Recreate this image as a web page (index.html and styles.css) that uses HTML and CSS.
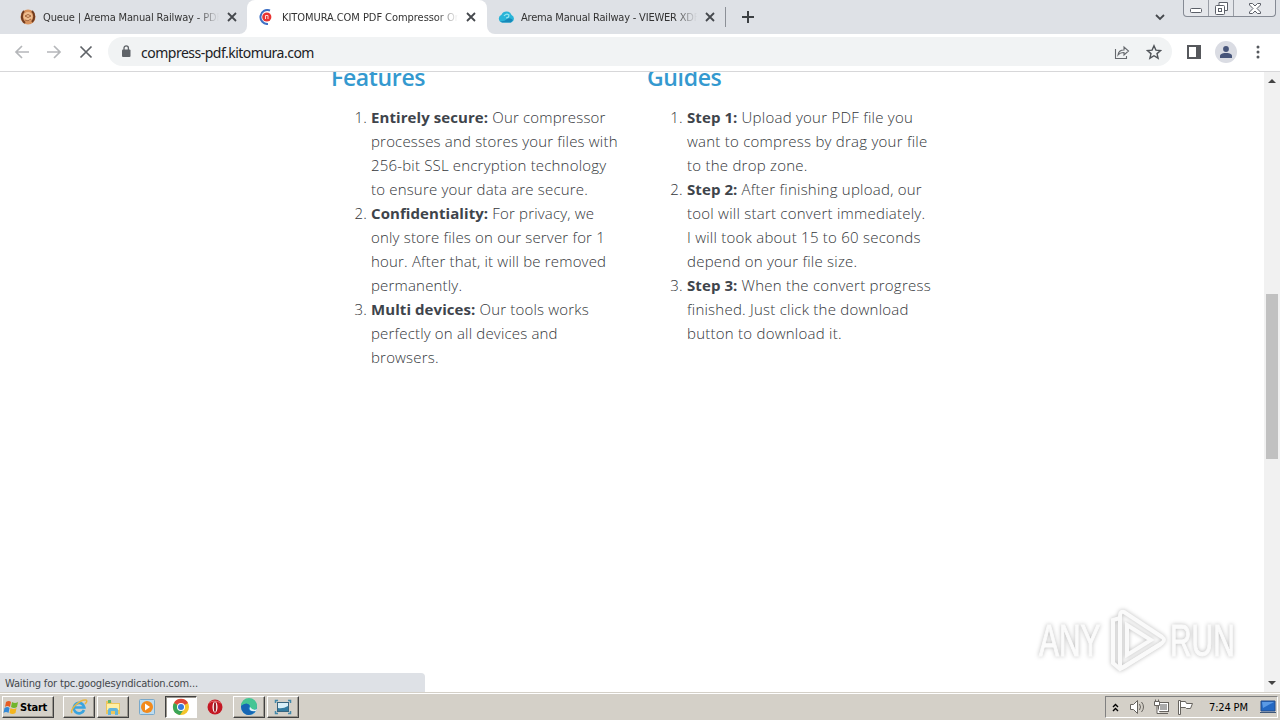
FILE: index.html
```html
<!DOCTYPE html>
<html lang="en">
<head>
    <meta charset="UTF-8">
    <meta name="viewport" content="width=device-width, initial-scale=1.0">
    <title>KITOMURA.COM PDF Compressor Online</title>
    <link rel="stylesheet" href="styles.css">
</head>
<body>
    <div class="desktop">
        <header class="tab-strip">
            <div class="tab tab-first">
                <svg class="favicon" width="16" height="16" viewBox="0 0 16 16"><circle cx="8" cy="8" r="7.500" fill="#d9935d"/><path d="M4 2C1 5 1 11 5 14M12 2c3 3 3 8 0 11" fill="none" stroke="#713c20" stroke-width="2"/><circle cx="8" cy="7.500" r="4.500" fill="#efbe90"/><path d="M5 7q3-3 6 0-3 3-6 0M5 11q3 2 6-1" fill="none" stroke="#a4653d"/></svg>
                <span class="tab-title">Queue | Arema Manual Railway - PDF</span>
                <svg class="tab-close" width="10" height="10" viewBox="0 0 10 10"><path d="M1 1l8 8M9 1L1 9"/></svg>
            </div>
            <div class="tab tab-active">
                <svg class="favicon" width="16" height="16" viewBox="0 0 16 16"><path d="M12 1.500A7 7 0 1 0 10 15" fill="none" stroke="#3e70c5" stroke-width="2"/><circle cx="8.800" cy="8" r="4.600" fill="#e83432"/><path d="M7.500 10V6.500h2.500V10" fill="none" stroke="#ffd9d5" stroke-width="1"/></svg>
                <span class="tab-title">KITOMURA.COM PDF Compressor Online</span>
                <svg class="tab-close" width="10" height="10" viewBox="0 0 10 10"><path d="M1 1l8 8M9 1L1 9"/></svg>
            </div>
            <div class="tab tab-last">
                <svg class="favicon" width="17" height="16" viewBox="0 0 17 16"><path d="M4 13.500a4 4 0 0 1-.5-7.700A5.500 5.500 0 0 1 13.600 6 4 4 0 0 1 13 13.500z" fill="#29b4d8"/><path d="M2 12q4 1 7-2 3-2 6 1l-2 2.500H4z" fill="#1689ba"/><path d="M6 7q2-3 5-1 0 3-3 3" fill="none" stroke="#96e5f0" stroke-width="1.200"/></svg>
                <span class="tab-title">Arema Manual Railway - VIEWER XDF</span>
                <svg class="tab-close" width="10" height="10" viewBox="0 0 10 10"><path d="M1 1l8 8M9 1L1 9"/></svg>
            </div>
            <svg class="new-tab" width="12" height="12" viewBox="0 0 12 12"><path d="M6 0v12M0 6h12"/></svg>
            <svg class="tab-search" width="10" height="7" viewBox="0 0 10 7"><path d="M1 1l4 4 4-4"/></svg>
            <div class="window-controls">
                <span class="control"><svg width="12" height="5" viewBox="0 0 12 5"><rect x=".5" y=".5" width="11" height="4" rx="1"/></svg></span>
                <span class="control control-max"><svg width="13" height="13" viewBox="0 0 13 13"><path d="M4 4V.5h8.500v8H9"/><rect x=".5" y="3.500" width="9" height="9" rx="1"/><rect x="3.500" y="6.500" width="3" height="3"/></svg></span>
                <span class="control control-close"><svg width="12" height="11" viewBox="0 0 12 11"><path d="M.5.5h3L6 3 8.500.5h3v1.500L8 5.500l3.500 3.500v1.500h-3L6 8l-2.500 2.500h-3V9L4 5.500.5 2z"/></svg></span>
            </div>
        </header>

        <nav class="toolbar">
            <svg class="nav-icon" width="16" height="16" viewBox="0 0 16 16"><path d="M15 8H2M8 2L2 8l6 6"/></svg>
            <svg class="nav-icon" width="16" height="16" viewBox="0 0 16 16"><path d="M1 8h13M8 2l6 6-6 6"/></svg>
            <svg class="nav-icon nav-stop" width="16" height="16" viewBox="0 0 16 16"><path d="M2.500 2.500l11 11M13.500 2.500l-11 11"/></svg>
            <div class="address-bar">
                <svg class="lock" width="10" height="13" viewBox="0 0 10 13"><rect x="1" y="4.500" width="8.500" height="7.500" rx="1" fill="#5f6368"/><path d="M3 5V3a2.200 2.200 0 0 1 4.400 0v2" fill="none" stroke="#5f6368" stroke-width="1.300"/></svg>
                <span class="url">compress-pdf.kitomura.com</span>
                <svg class="share" width="16" height="16" viewBox="0 0 16 16"><path d="M1.500 5v9.500h11V12M4 11c.5-4 3-5 6-5V3l4.500 4L10 11V8.500c-3 0-4.500.5-6 2.500z"/></svg>
                <svg class="star" width="16" height="16" viewBox="0 0 16 16"><path d="M8 1.800l1.900 4.300 4.700.4-3.600 3.100 1.100 4.600L8 11.700l-4.100 2.500L5 9.600 1.400 6.500l4.700-.4z"/></svg>
            </div>
            <svg class="side-panel" width="14" height="14" viewBox="0 0 14 14"><path d="M0 0h14v14H0zM2 2v10h7V2z" fill="#56585c" fill-rule="evenodd"/></svg>
            <span class="avatar"><svg width="12" height="12" viewBox="0 0 12 12"><circle cx="6" cy="3" r="2.900"/><path d="M0 12V9.800C0 7.500 4 7 6 7s6 .5 6 2.800V12z"/></svg></span>
            <svg class="menu-dots" width="4" height="14" viewBox="0 0 4 14"><circle cx="2" cy="2" r="1.500"/><circle cx="2" cy="7" r="1.500"/><circle cx="2" cy="12" r="1.500"/></svg>
        </nav>

        <div class="viewport">
            <main class="page">
                <section class="column">
                    <h2>Features</h2>
                    <ol>
                        <li><b>Entirely secure:</b> Our compressor<br>processes and stores your files with<br>256-bit SSL encryption technology<br>to ensure your data are secure.</li>
                        <li><b>Confidentiality:</b> For privacy, we<br>only store files on our server for 1<br>hour. After that, it will be removed<br>permanently.</li>
                        <li><b>Multi devices:</b> Our tools works<br>perfectly on all devices and<br>browsers.</li>
                    </ol>
                </section>
                <section class="column guides">
                    <h2>Guides</h2>
                    <ol>
                        <li><b>Step 1:</b> Upload your PDF file you<br>want to compress by drag your file<br>to the drop zone.</li>
                        <li><b>Step 2:</b> After finishing upload, our<br>tool will start convert immediately.<br>I will took about 15 to 60 seconds<br>depend on your file size.</li>
                        <li><b>Step 3:</b> When the convert progress<br>finished. Just click the download<br>button to download it.</li>
                    </ol>
                </section>
            </main>
            <div class="scrollbar">
                <span class="arrow arrow-up"></span>
                <span class="thumb"></span>
                <span class="arrow arrow-down"></span>
            </div>
            <div class="status">Waiting for tpc.googlesyndication.com...</div>
            <div class="watermark">
                <span>ANY</span>
                <svg width="58" height="66" viewBox="0 0 58 66"><path d="M15 4l38 25q4 3 0 6L15 59q-4 3-4-3V8q0-5 4-4z"/><path d="M18 17l24 15-24 15zM11 10L4 12v43l7 6 41-25"/></svg>
                <span>RUN</span>
            </div>
        </div>

        <footer class="taskbar">
            <div class="start">
                <svg width="16" height="16" viewBox="0 0 16 16"><path d="M3 3q3-2 5 0L7 8Q4 6 2 8z" fill="#e65d25"/><path d="M9 3q3 2 6 0l-1 5q-3 2-6 0z" fill="#72b52c"/><path d="M1.500 9q3-2 5 0l-1 5Q3 12 .5 14z" fill="#3389d7"/><path d="M7.500 9q3 2 6 0l-1 5q-3 2-6 0z" fill="#f4b51e"/></svg>
                <span>Start</span>
            </div>
            <div class="task"><svg width="18" height="18" viewBox="0 0 18 18"><path d="M14 12A5.300 5.300 0 1 1 14.300 9.500H5" fill="none" stroke="#3aa4df" stroke-width="2.700"/><path d="M2 15C-1 12 10 1 16 2q2 1-1 4" fill="none" stroke="#e9b640" stroke-width="1.500"/></svg></div>
            <div class="task"><svg width="18" height="18" viewBox="0 0 18 18"><path d="M2 3h5l1 2h8v11H2z" fill="#edc65b"/><path d="M3 6h12v6H3z" fill="#fff0a5"/><path d="M4 17v-5q0-2 2-2h6q2 0 2 2v5h-3v-4H7v4z" fill="#62b5dc"/><path d="M4 2h3v3H4z" fill="#66b567"/></svg></div>
            <div class="task task-flat"><svg width="18" height="18" viewBox="0 0 18 18"><rect x="1.500" y="1.500" width="15" height="15" rx="1" fill="#bddcf0" stroke="#79a9cb"/><circle cx="9" cy="9" r="6" fill="#f28a1c"/><path d="M7 5.500l5 3.500-5 3.500z" fill="#fff"/></svg></div>
            <div class="task task-open"><svg width="18" height="18" viewBox="0 0 18 18"><circle cx="9" cy="9" r="8" fill="#f4c52c"/><path d="M9 9L2 5a8 8 0 0 1 14 0z" fill="#dd4739"/><path d="M9 9L2 5a8 8 0 0 0 6 12l4-6z" fill="#3ba557"/><circle cx="9" cy="9" r="4" fill="#fff"/><circle cx="9" cy="9" r="3" fill="#367bdd"/></svg></div>
            <div class="task task-flat"><svg width="16" height="18" viewBox="0 0 16 18"><ellipse cx="8" cy="9" rx="7.500" ry="7.500" fill="#c41824"/><path d="M2 5q5-4 12 0" fill="none" stroke="#e76c6d"/><ellipse cx="8" cy="9" rx="2.500" ry="5.500" fill="#fff"/><ellipse cx="8" cy="9" rx="1.200" ry="5" fill="#962028"/></svg></div>
            <div class="task"><svg width="18" height="18" viewBox="0 0 18 18"><circle cx="9" cy="9" r="8" fill="#1686cd"/><path d="M1 8A8 8 0 0 1 17 8q0 4-4 4-4-1-3-3Q9 3 1 8z" fill="#45c594"/><path d="M1 8q6-5 9 0-3 2 0 5 3 1 6-1-6 8-12 3-3-3-3-7z" fill="#1765b3"/><path d="M10 9q-2 5 6 4l1-2q-4 2-7-2z" fill="#e4f4f7"/></svg></div>
            <div class="task"><svg width="18" height="18" viewBox="0 0 18 18"><path d="M1.500 5V2.500H4M14 2.500h2.500V5M16.500 13v2.500H14M4 15.500H1.500V13" fill="none" stroke="#4288aa" stroke-width="1.500"/><rect x="3.500" y="4.500" width="11" height="9" fill="#d9f0f9" stroke="#37647e"/><path d="M4 10q5 1 10-2v5H4z" fill="#347ca1"/></svg></div>
            <div class="tray">
                <svg class="chevrons" width="7" height="9" viewBox="0 0 7 9"><path d="M1 4l2.500-2.500L6 4M1 8l2.500-2.500L6 8" fill="none" stroke="#000" stroke-width="1.400"/></svg>
                <svg class="tray-icon" width="17" height="16" viewBox="0 0 17 16"><path d="M1.500 5.500h3l4-4v13l-4-4h-3z"/><path d="M10.500 5q2 3 0 6M12.500 3q4 5 0 10" class="wave"/></svg>
                <svg class="tray-icon" width="17" height="16" viewBox="0 0 17 16"><rect x="5.500" y="3.500" width="10" height="9"/><path d="M7 5h7v6H7z" fill="#aaa" stroke="none"/><path d="M7 14.500h8M1.500 2.500h5v4h-5zM2.500.5v2M5.500.5v2M4 7v7.500h3"/></svg>
                <svg class="tray-icon" width="17" height="16" viewBox="0 0 17 16"><path d="M1.500 1.500h2v14h-2zM3.500 2.500h5l1 2h6l-2 5h-4l-1-1h-5z"/></svg>
                <span class="clock">7:24 PM</span>
                <svg class="show-desktop" width="16" height="14" viewBox="0 0 16 14"><path d="M1 1h14v10H1z" fill="#2368c3" stroke="#244d8b"/><path d="M2 2h12L3 8z" fill="#5b9ae5"/><path d="M0 12h16v1H0z" fill="#3e5779"/></svg>
            </div>
        </footer>
    </div>
</body>
</html>
```
FILE: styles.css
```css
* {
    box-sizing: border-box;
}
body {
    margin: 0;
    overflow: hidden;
    background-color: #fff;
    font-family: "DejaVu Sans Condensed", "DejaVu Sans", sans-serif;
    font-size: 11px;
    color: #333;
}
svg {
    display: block;
    flex-shrink: 0;
}
.desktop {
    width: 1280px;
    height: 720px;
    display: flex;
    flex-direction: column;
}

/* Tabs */
.tab-strip {
    height: 34px;
    display: flex;
    background: linear-gradient(to right, #dee1e6 240px, #fff 240px, #fff 495px, #dee1e6 495px);
}
.tab {
    width: 240px;
    height: 34px;
    display: flex;
    align-items: center;
    padding: 0 11px;
}
.tab-first {
    width: 247px;
    padding: 0 10px 0 20px;
    border-radius: 0 0 8px 0;
    background-color: #dee1e6;
}
.tab-active {
    background-color: #fff;
    border-radius: 8px 8px 0 0;
    box-shadow: 0 -8px 0 #dee1e6;
}
.tab-last {
    width: 239px;
    border-radius: 0 0 0 8px;
    background: linear-gradient(#8c9097, #8c9097) right center / 1px 20px no-repeat #dee1e6;
}
.tab-title {
    width: 176px;
    margin-left: 7px;
    overflow: hidden;
    white-space: nowrap;
    letter-spacing: -0.15px;
    mask-image: linear-gradient(to right, #000 154px, transparent);
}
.tab-active .tab-title {
    margin-left: 8px;
    letter-spacing: -0.05px;
}
.tab-last .tab-title {
    margin-left: 6px;
    letter-spacing: -0.2px;
}
.tab-close {
    margin-left: auto;
    fill: none;
    stroke: #45484d;
    stroke-width: 1.8;
}
.new-tab {
    margin: 11px 0 0 16px;
    fill: none;
    stroke: #3c4043;
    stroke-width: 2;
}
.tab-search {
    margin: 14px 18px 0 auto;
    fill: none;
    stroke: #45484d;
    stroke-width: 1.8;
}
.window-controls {
    display: flex;
    width: 93px;
    height: 17px;
    margin-right: 4px;
    border: 1px solid #858a94;
    border-top: 0;
    border-radius: 0 0 4px 4px;
    background-color: #e5e7eb;
}
.control {
    width: 25px;
    display: flex;
    justify-content: center;
    align-items: center;
    border-right: 1px solid #9a9ea6;
    fill: #fff;
    stroke: #5b5f68;
}
.control:first-child {
    padding-top: 5px;
}
.control-close {
    width: 41px;
    border-right: 0;
}

/* Toolbar */
.toolbar {
    height: 38px;
    display: flex;
    align-items: center;
    padding: 0 20px 2px 14px;
    border-bottom: 1px solid #d7d7d9;
}
.nav-icon {
    margin-right: 16px;
    fill: none;
    stroke: #b5b7ba;
    stroke-width: 1.7;
}
.nav-stop {
    margin-right: 14px;
    stroke: #5f6368;
}
.address-bar {
    width: 1064px;
    height: 29px;
    display: flex;
    align-items: center;
    padding: 0 10px 0 13px;
    border-radius: 15px;
    background-color: #f1f3f4;
}
.url {
    margin: 1px auto 0 10px;
    font-family: "Noto Sans", sans-serif;
    font-size: 14px;
    letter-spacing: -0.5px;
    color: #202124;
}
.share {
    fill: none;
    stroke: #66696e;
    stroke-width: 1.1;
}
.star {
    margin-left: 16px;
    fill: none;
    stroke: #505459;
    stroke-width: 1.4;
}
.side-panel {
    margin-left: 15px;
}
.avatar {
    width: 22px;
    height: 22px;
    display: flex;
    align-items: center;
    justify-content: center;
    margin-left: 14px;
    border-radius: 50%;
    background-color: #dadce3;
    fill: #47557a;
}
.menu-dots {
    margin-left: auto;
    fill: #55585d;
}

/* Page content */
.viewport {
    position: relative;
    height: 620px;
    display: flex;
    justify-content: space-between;
    overflow: hidden;
}
.page {
    display: flex;
    padding-left: 331px;
    font-family: "Open Sans", "Noto Sans", sans-serif;
    font-size: 15px;
    line-height: 24px;
    color: #33363a;
}
.column {
    width: 316px;
    white-space: nowrap;
}
h2 {
    height: 29px;
    margin: -9px 0 13px;
    font-size: 23px;
    line-height: 29px;
    font-weight: 600;
    letter-spacing: -0.35px;
    color: #3499cf;
}
ol {
    margin: 0;
    padding-left: 40px;
}
li {
    font-weight: 300;
    letter-spacing: 0.18px;
}
.guides li {
    letter-spacing: 0.24px;
}
b {
    font-weight: 700;
    letter-spacing: 0.08px;
    color: #3e444b;
}
.scrollbar {
    width: 16px;
    display: flex;
    flex-direction: column;
    align-items: center;
    background-color: #f1f1f1;
}
.arrow {
    border: 4px solid transparent;
}
.arrow-up {
    margin-top: 3px;
    border-bottom-color: #444;
}
.thumb {
    width: 12px;
    height: 165px;
    margin-top: 211px;
    background-color: #c1c1c1;
}
.arrow-down {
    margin: auto 0 3px;
    border-top-color: #444;
}
.status {
    position: absolute;
    left: 0;
    bottom: 0;
    width: 425px;
    height: 19px;
    padding-left: 5px;
    border-top-right-radius: 4px;
    background-color: #dee1e6;
    line-height: 21px;
    letter-spacing: -0.17px;
    color: #44474b;
}
.watermark {
    position: absolute;
    right: 44px;
    bottom: 18px;
    width: 197px;
    display: flex;
    align-items: center;
    justify-content: space-between;
    font-family: "Liberation Sans", sans-serif;
    font-size: 44px;
    color: #fbfbfb;
    -webkit-text-stroke: 1px #fbfbfb;
    filter: drop-shadow(0 0 2px #bbb);
}
.watermark span {
    width: 66px;
    line-height: 50px;
    transform: scaleX(0.68);
    transform-origin: left;
}
.watermark svg {
    fill: none;
    stroke: #fafafa;
    stroke-width: 4;
}

/* Taskbar */
.taskbar {
    height: 28px;
    display: flex;
    align-items: center;
    padding: 1px 2px 0;
    border-top: 1px solid #d4d0c8;
    box-shadow: inset 0 1px #fff;
    background-color: #d4d0c8;
}
.start,
.task {
    height: 22px;
    display: flex;
    align-items: center;
    border: 1px solid;
    border-color: #fff #404040 #404040 #fff;
    box-shadow: inset -1px -1px #9b978f;
}
.start {
    width: 52px;
    margin-right: 9px;
    font-weight: bold;
    letter-spacing: -0.2px;
    color: #000;
}
.start span {
    margin-left: 1px;
}
.task {
    width: 32px;
    margin-right: 2px;
    justify-content: center;
}
.task-flat {
    border-color: transparent;
    box-shadow: none;
}
.task-open {
    border-color: #404040 #fff #fff #404040;
    box-shadow: inset 1px 1px #9b978f;
    background-color: #fff;
}
.tray {
    width: 173px;
    height: 22px;
    display: flex;
    align-items: center;
    margin-left: auto;
    padding: 0 1px 0 6px;
    border: 1px solid;
    border-color: #808080 #fff #fff #808080;
    color: #000;
}
.chevrons {
    margin-right: 10px;
}
.tray-icon {
    margin-right: 7px;
    fill: #fff;
    stroke: #66635e;
}
.wave {
    fill: none;
}
.clock {
    margin-left: 8px;
    white-space: nowrap;
    letter-spacing: -0.15px;
}
.show-desktop {
    margin-left: auto;
}
```
